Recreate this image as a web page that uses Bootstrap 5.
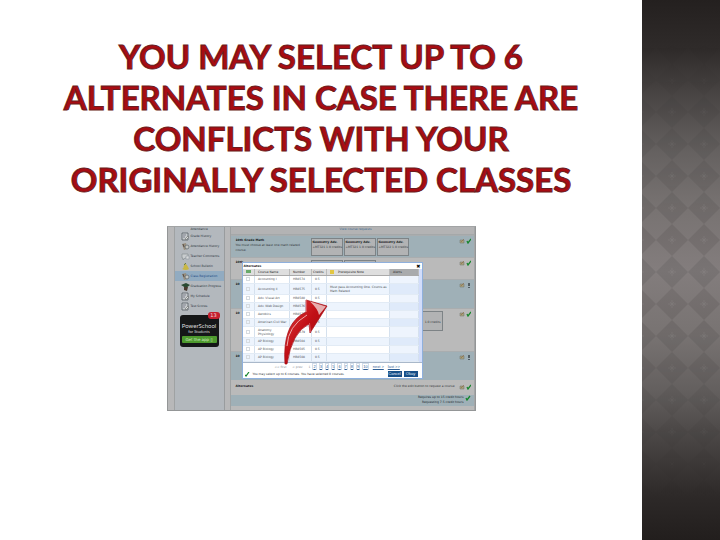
<!DOCTYPE html>
<html lang="en">
<head>
<meta charset="utf-8">
<meta name="viewport" content="width=device-width, initial-scale=1">
<title>Alternates</title>
<link href="https://cdn.jsdelivr.net/npm/bootstrap@5.3.0/dist/css/bootstrap.min.css" rel="stylesheet">
<style>
body{background:#fff;font-family:"Liberation Sans",Arial,sans-serif}
.slide-title{font:700 33px/41px Lato,"Open Sans",sans-serif;color:#a80c12;-webkit-text-stroke:1px #6a1c20;padding-top:36px;margin-bottom:26px}
.slide-side{flex:0 0 78px}
.shot{width:309px;background:#b8b8b9;color:#34393c;font-family:"DejaVu Sans",Verdana,sans-serif;font-size:3px;line-height:5px;border:1px solid #949697;border-top-color:#a2a4a5}
.shot button{font-family:inherit}
.shot a{color:inherit;text-decoration:none}
.gutter{flex:0 0 7px;border-right:1px solid #9fa2a3}
.menu{flex:0 0 50px;background:#b3b8bd;border-right:1px solid #999c9e}
.menu a{display:flex;align-items:center;gap:1px;height:10px;padding-left:6px;white-space:nowrap;color:#2c3640}
.menu a svg{width:9px;height:9px;flex:none}
.menu a.cut{height:4px;padding-left:16px}
.menu a.on{background:#91abc1;color:#1c4884}
.app{background:#151718;border-radius:3px;width:39px;height:32px;margin:4px 0 0 5px;color:#ddd;padding-top:7px}
.app b{font:400 6px/7px Lato,sans-serif;display:block}
.app i{font:400 4px/6px Lato,sans-serif;display:block}
.app button{display:block;border:0;background:#4d9a2e;color:#d6ecc8;font-size:4px;line-height:7px;width:35px;padding:0;margin:1px auto 0;border-radius:1px}
.count{top:-3px;right:-1px;background:#c3202f;color:#f3dada;border-radius:3px;font-size:5px;line-height:7px;width:12px}
.panel{margin-left:5px;border-left:1px solid #9fa2a3;border-right:1px solid #a4a6a7;background:#bababa}
.crumb{height:8px;background:#b3b3b4;color:#3f698f;padding-left:109px;border-bottom:1px solid #a5a8a9}
.req{padding:2px 3px 0 5px;border-top:1px solid #a9adaf}
.req.blue,.sum{background:#9fb0b7}
.req b,.alt b{color:#15191b}
.r1,.r2{height:22px}
.r3,.r5{height:29px}
.r4{height:43px}
.opt{width:32px;height:18px;border:1px solid #7d8386;background:#b2b3b4;padding:1px;margin-right:1px;white-space:nowrap;flex:none}
.note{width:75px;flex:none;padding-right:8px}
.st svg{width:12px;height:6px;display:block}
.alt{height:15px;padding:4px 3px 0 5px}
.sum{height:11px;padding:0 3px 0 5px;color:#20282e;margin-bottom:4px}
.sum svg{width:6px;height:6px;margin-left:1px}
.dlg{left:74px;top:35px;width:181px;background:#fff;color:#4c5156;border:1px solid #8fb0dd;line-height:4px}
.dlg-head{height:6px;line-height:6px;padding:0 1px;color:#111}
.dlg-head button,.pick{border:0;padding:0;background:none;font-size:5px;line-height:5px;color:#000}
.grid{width:176px;table-layout:fixed;border-collapse:collapse;line-height:4px}
.grid th{height:6px;background:#dedede;border-bottom:1px solid #aaa;border-right:1px solid #bbb;font-weight:400;color:#222;padding:0 0 0 3px;white-space:nowrap}
.grid td{height:8px;padding:0 0 0 3px;border-right:1px solid #d5e1ee;border-bottom:1px solid #e2ebf5;white-space:nowrap}
.grid th:nth-child(4){padding-left:1px}
.grid th:last-child{background:#a9abad}
.grid td:last-child{background:#eef4fd}
.grid tr.odd td{background:#edf4fd}
.grid tr.odd td:last-child{background:#dfeafa}
.grid tr.tall td{height:11px}
.tick{appearance:none;width:4px;height:4px;border:1px solid #d6dbe0;display:block;margin:0}
.bar{flex:0 0 3px;background:#d2ddfb}
.pages{height:9px;border-top:1px solid #a9b8ca;color:#8a9096;padding-left:32px;gap:2px;white-space:nowrap}
.pages a{color:#2f5f95;text-decoration:underline;border:1px solid #d3deea;font:4px/5px "Liberation Sans",sans-serif}
.pages a.go{border:0;padding-left:2px}
.dlg-foot{height:7px;color:#2f3438;padding:0 4px 0 2px;white-space:nowrap}
.dlg-foot svg{width:5px;height:5px;margin-right:3px}
.dlg-foot button{border:0;padding:0;background:#174f88;color:#e8f1fa;font:4px/6px "Liberation Sans",sans-serif;height:6px;width:14px;margin-left:2px}
.arrow{left:115px;top:72px;width:46px;height:67px}
</style>
<script src="https://cdn.jsdelivr.net/npm/bootstrap@5.3.0/dist/js/bootstrap.bundle.min.js"></script>
</head>
<body>
<svg width="0" height="0" class="position-absolute" aria-hidden="true">
<symbol id="doc" viewBox="0 0 9 9"><path d="M1 1h6v7H1z" fill="#c5cacc" stroke="#555e65" stroke-width=".8"/><path d="M2 3h3M2 5h2" stroke="#667" stroke-width=".7"/><path d="M4 7l3-3 1 1-3 3z" fill="#d8dcdc" stroke="#555"  stroke-width=".5"/></symbol>
<symbol id="people" viewBox="0 0 9 9"><path d="M1 2l4-1 1 6-3 1z" fill="#998e7c"/><circle cx="6" cy="5" r="2" fill="#c5c6c0" stroke="#5c6570" stroke-width=".7"/><path d="M2 2l1 3" stroke="#594f48"/></symbol>
<symbol id="chat" viewBox="0 0 9 9"><path d="M1 2h6v4H4L2 8V6H1z" fill="#c9cdcf" stroke="#7f878c" stroke-width=".6"/><path d="M5 4h3v3H5z" fill="#d5d8d9" stroke="#8b9398" stroke-width=".5"/></symbol>
<symbol id="bell" viewBox="0 0 9 9"><path d="M1 7q2-1 2-4t2-1q2 2 3 5-3 2-7 0z" fill="#c8b744"/><path d="M3 3l2-2" stroke="#657a5a"/></symbol>
<symbol id="cap" viewBox="0 0 9 9"><path d="M0 3l5-2 4 2-4 3z" fill="#294a32"/><path d="M3 5l4 0-1 4-3-1z" fill="#4a3a30"/></symbol>
<symbol id="ok" viewBox="0 0 12 6"><path d="M1 2h4v3H1z" fill="#a9a27e" stroke="#6d736b" stroke-width=".5"/><path d="M2 4l3-3" stroke="#8d6440" stroke-width=".6"/><path d="M8 3l1 2 3-4" fill="none" stroke="#16852c" stroke-width="1.3"/></symbol>
<symbol id="warn" viewBox="0 0 12 6"><path d="M1 2h4v3H1z" fill="#a9a27e" stroke="#6d736b" stroke-width=".5"/><path d="M2 4l3-3" stroke="#8d6440" stroke-width=".6"/><path d="M10 1v3M10 5v1" stroke="#20282f" stroke-width="1.2"/></symbol>
</svg>
<div class="d-flex min-vh-100">
<main class="flex-grow-1 px-5">
<h1 class="slide-title text-center">YOU MAY SELECT UP TO 6<br>ALTERNATES IN CASE THERE ARE<br>CONFLICTS WITH YOUR<br>ORIGINALLY SELECTED CLASSES</h1>
<section class="shot position-relative mx-auto d-flex">
<div class="gutter"></div>
<nav class="menu">
<a href="#" class="cut">Attendance</a>
<a href="#"><svg><use href="#doc"/></svg>Grade History</a>
<a href="#"><svg><use href="#people"/></svg>Attendance History</a>
<a href="#"><svg><use href="#chat"/></svg>Teacher Comments</a>
<a href="#"><svg><use href="#bell"/></svg>School Bulletin</a>
<a href="#" class="on"><svg><use href="#people"/></svg>Class Registration</a>
<a href="#"><svg><use href="#cap"/></svg>Graduation Progress</a>
<a href="#"><svg><use href="#doc"/></svg>My Schedule</a>
<a href="#"><svg><use href="#doc"/></svg>Test Scores</a>
<div class="app position-relative text-center"><span class="count position-absolute">13</span><b>PowerSchool</b><i>for Students</i><button type="button">Get the app ▯</button></div>
</nav>
<div class="panel flex-grow-1">
<div class="crumb">View course requests</div>
<div class="req blue r1 d-flex"><div class="note"><b>10th Grade Math</b><br>You must choose at least one math related course.</div><div class="d-flex"><div class="opt"><b>Geometry Adv.</b><br>+MT321 1.0 credits</div><div class="opt"><b>Geometry Adv.</b><br>+MT321 1.0 credits</div><div class="opt"><b>Geometry Adv.</b><br>+MT322 1.0 credits</div></div><div class="st ms-auto"><svg><use href="#ok"/></svg></div></div>
<div class="req r2 d-flex"><div class="note"><b>10th</b></div><div class="d-flex"><div class="opt"></div><div class="opt"></div></div><div class="st ms-auto"><svg><use href="#ok"/></svg></div></div>
<div class="req blue r3 d-flex"><b>10</b><div class="st ms-auto"><svg><use href="#warn"/></svg></div></div>
<div class="req r4 d-flex"><b>10</b><div class="st ms-auto d-flex"><div class="opt h-50 me-3 pt-2 text-end">1.0 credits</div><svg><use href="#ok"/></svg></div></div>
<div class="req blue r5 d-flex"><b>10</b><div class="st ms-auto"><svg><use href="#warn"/></svg></div></div>
<div class="alt d-flex justify-content-between"><b>Alternates</b><span class="d-flex">Click the edit button to request a course<span class="st ms-1"><svg><use href="#ok"/></svg></span></span></div>
<div class="sum d-flex justify-content-end text-end"><span>Requires up to 15 credit hours<br>Requesting 7.5 credit hours</span><svg viewBox="0 0 6 6"><path d="M1 3l1 2 3-4" fill="none" stroke="#16852c" stroke-width="1.3"/></svg></div>
</div>
<div class="dlg position-absolute">
<div class="dlg-head d-flex justify-content-between"><b>Alternates</b><button type="button" aria-label="Close">✖</button></div>
<div class="d-flex">
<table class="grid">
<colgroup><col style="width:12px"><col style="width:35px"><col style="width:22px"><col style="width:15px"><col style="width:63px"><col style="width:29px"></colgroup>
<thead><tr><th><button type="button" class="pick d-block" aria-label="Select"><svg width="6" height="4" class="d-block"><path d="M0 0h5v3H0z" fill="#69a968"/></svg></button></th><th>Course Name</th><th>Number</th><th>Credits</th><th><span class="d-flex gap-1"><svg width="4" height="4"><path d="M0 0h4v4H0z" fill="#e2c642"/></svg>Prerequisite Note</span></th><th>Alerts</th></tr></thead>
<tbody>
<tr><td><input type="checkbox" class="tick" aria-label="Accounting I"></td><td>Accounting I</td><td>HB8574</td><td>0.5</td><td></td><td></td></tr>
<tr class="odd tall"><td><input type="checkbox" class="tick" aria-label="Accounting II"></td><td>Accounting II</td><td>HB8575</td><td>0.5</td><td>Must pass Accounting One. Counts as<br>Math Related</td><td></td></tr>
<tr><td><input type="checkbox" class="tick" aria-label="Adv. Visual Art"></td><td>Adv. Visual Art</td><td>HB8580</td><td>0.5</td><td></td><td></td></tr>
<tr class="odd"><td><input type="checkbox" class="tick" aria-label="Adv. Web Design"></td><td>Adv. Web Design</td><td>HB8576</td><td></td><td></td><td></td></tr>
<tr><td><input type="checkbox" class="tick" aria-label="Aerobics"></td><td>Aerobics</td><td>HB8577</td><td></td><td></td><td></td></tr>
<tr class="odd"><td><input type="checkbox" class="tick" aria-label="American Civil War"></td><td>American Civil War</td><td></td><td>0.5</td><td></td><td></td></tr>
<tr class="tall"><td><input type="checkbox" class="tick" aria-label="Anatomy Physiology"></td><td>Anatomy<br>Physiology</td><td>HB8579</td><td>0.5</td><td></td><td></td></tr>
<tr class="odd"><td><input type="checkbox" class="tick" aria-label="AP Biology 1"></td><td>AP Biology</td><td>HB8504</td><td>0.5</td><td></td><td></td></tr>
<tr><td><input type="checkbox" class="tick" aria-label="AP Biology 2"></td><td>AP Biology</td><td>HB8505</td><td>0.5</td><td></td><td></td></tr>
<tr class="odd"><td><input type="checkbox" class="tick" aria-label="AP Biology 3"></td><td>AP Biology</td><td>HB8508</td><td>0.5</td><td></td><td></td></tr>
</tbody></table>
<div class="bar"></div></div>
<div class="pages d-flex align-items-center"><span>&lt;&lt; first</span><span class="ps-1">&lt; prev</span><span class="ps-1">1</span><a href="#">2</a><a href="#">3</a><a href="#">4</a><a href="#">5</a><a href="#">6</a><a href="#">7</a><a href="#">8</a><a href="#">9</a><a href="#">10</a><a href="#" class="go">next &gt;</a><a href="#" class="go">last &gt;&gt;</a></div>
<div class="dlg-foot d-flex align-items-center"><svg viewBox="0 0 5 5"><path d="M0 3l1 1 3-4" fill="none" stroke="#16852c" stroke-width="1.2"/></svg><span>You may select up to 6 courses. You have selected 0 courses.</span><button type="button" class="ms-auto">Cancel</button><button type="button">Okay</button></div>
</div>
<svg class="arrow position-absolute" viewBox="282 298 46 67" aria-hidden="true">
<defs><linearGradient id="red" x1="0" y1="0" x2="1" y2="1"><stop offset="0" stop-color="#e34444"/><stop offset=".45" stop-color="#c10f16"/><stop offset="1" stop-color="#8e070c"/></linearGradient></defs>
<path d="M284 363Q281 322 305 311V299L326 305L309 332L308 323Q291 331 286 363z" fill="url(#red)" stroke="#a50b12" stroke-width=".7"/>
<path d="M309 300.500L325 305.500L318 314Q317 308 309 300.500z" fill="#eccaca" opacity=".85"/>
<path d="M286 345Q287 325 306 314" fill="none" stroke="#efaaaa" stroke-width="1"/>
<path d="M305.500 299V311M308.500 322L309.500 331" stroke="#d8525a" stroke-width="1"/>
</svg>
</section>
</main>
<aside class="slide-side position-relative overflow-hidden">
<svg class="position-absolute w-100 h-100" aria-hidden="true">
<defs>
<linearGradient id="fade" x1="0" y1="0" x2="0" y2="1"><stop offset="0" stop-color="#24201f"/><stop offset=".09" stop-color="#2f2b2a"/><stop offset=".18" stop-color="#4a4645"/><stop offset=".28" stop-color="#656160"/><stop offset=".38" stop-color="#777271"/><stop offset=".5" stop-color="#837d7d"/><stop offset=".62" stop-color="#787372"/><stop offset=".73" stop-color="#625e5d"/><stop offset=".82" stop-color="#474342"/><stop offset=".92" stop-color="#2d2928"/><stop offset="1" stop-color="#221e1d"/></linearGradient>
<linearGradient id="show" x1="0" y1="0" x2="0" y2="1"><stop offset=".08" stop-color="#000"/><stop offset=".4" stop-color="#fff"/><stop offset=".6" stop-color="#fff"/><stop offset=".92" stop-color="#000"/></linearGradient>
<pattern id="dia" width="32" height="32" x="14" y="0" patternUnits="userSpaceOnUse"><path d="M16 0L32 16 16 32 0 16z" fill="#000" opacity=".08"/><path d="M16 12v8M12 16h8M14 14l4 4M18 14l-4 4" stroke="#fff" stroke-width=".5" opacity=".1"/></pattern>
<mask id="m"><rect width="100%" height="100%" fill="url(#show)"/></mask>
</defs>
<rect width="100%" height="100%" fill="url(#fade)"/><rect width="100%" height="100%" fill="url(#dia)" mask="url(#m)"/>
</svg>
</aside>
</div>
</body>
</html>
